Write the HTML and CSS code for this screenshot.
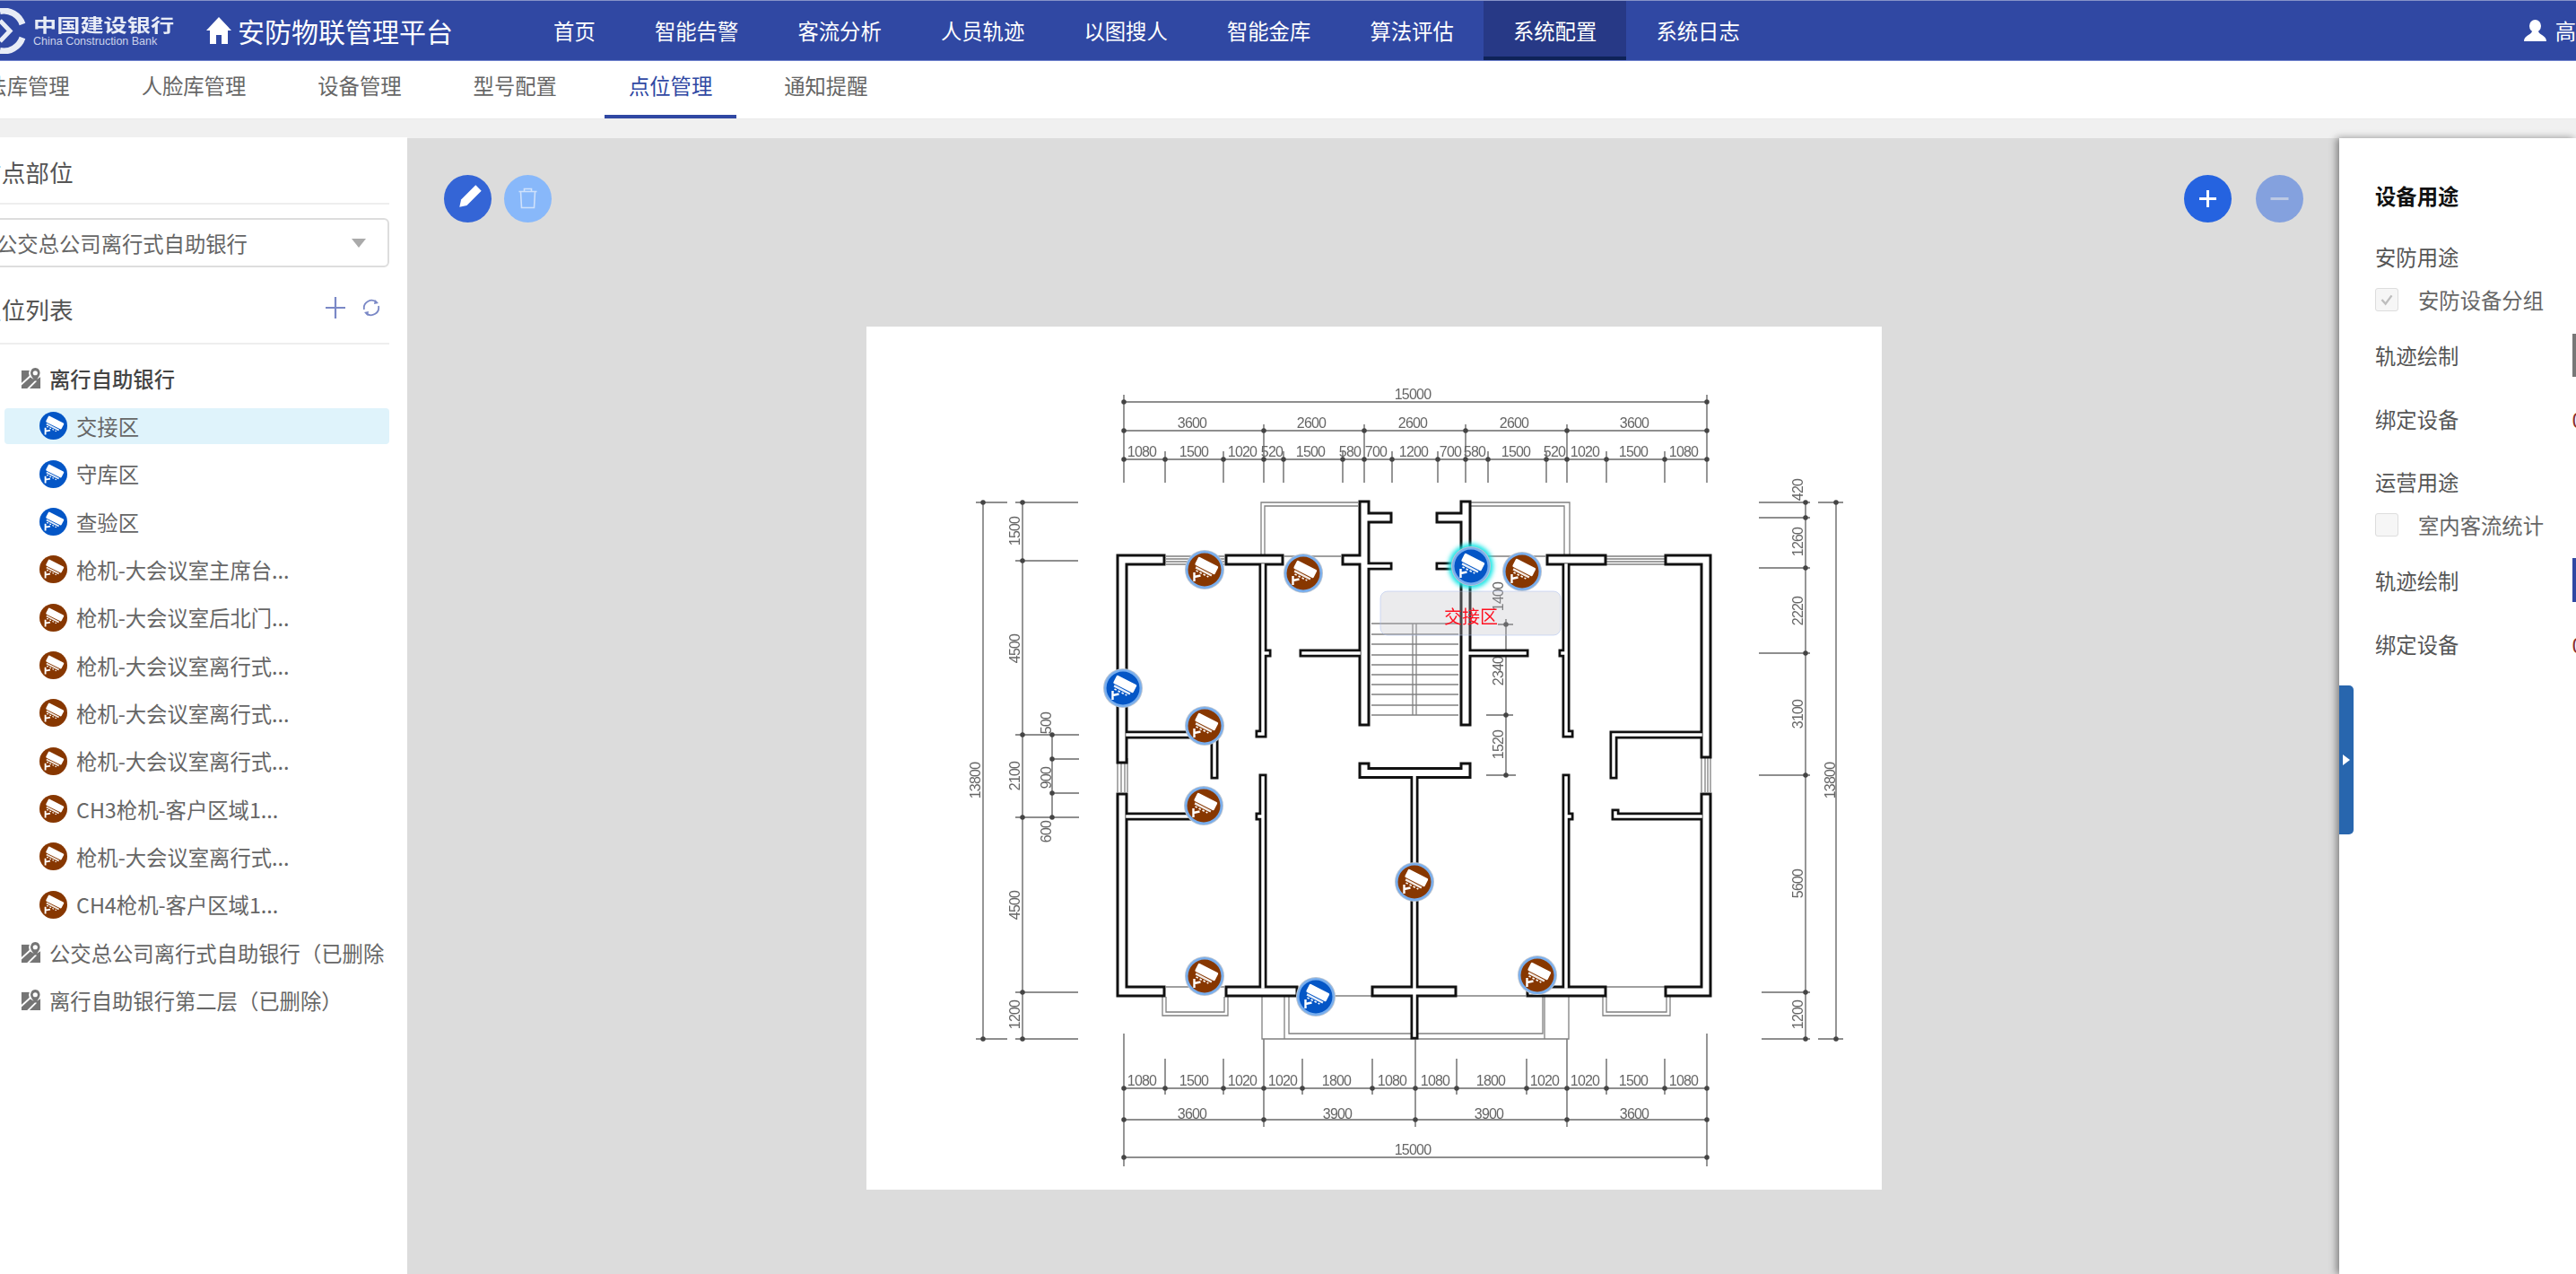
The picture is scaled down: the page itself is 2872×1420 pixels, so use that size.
FILE: index.html
```html
<!DOCTYPE html>
<html lang="zh-CN">
<head>
<meta charset="utf-8">
<title>安防物联管理平台</title>
<link rel="stylesheet" href="styles.css">
</head>
<body>
<svg class="defs" aria-hidden="true">
  <defs>
    <g id="cam">
      <g transform="rotate(27)">
        <rect x="-12.500" y="-10" width="25" height="10" rx="1.500" fill="#fff"/>
        <rect x="-10" y="1" width="20" height="2.400" fill="#fff" opacity=".9"/>
        <path d="M-8 5.200h2.500M-3.500 5.200h2.500M1 5.200h2.500M5.500 5.200h2" stroke="#fff" stroke-width="1.600"/>
      </g>
      <path d="M-11.500 13V3M-11.500 8L-4.500 6.500" stroke="#fff" stroke-width="2.400" fill="none"/>
    </g>
    <g id="pin-b">
      <circle r="22" fill="#b9c4d2"/>
      <circle r="21" fill="#78aeee"/>
      <circle r="18.500" fill="#0456c6"/>
      <use href="#cam"/>
    </g>
    <g id="pin-o">
      <circle r="22" fill="#b9c4d2"/>
      <circle r="21" fill="#78aeee"/>
      <circle r="18.500" fill="#873700"/>
      <use href="#cam"/>
    </g>
    <g id="ico-map">
      <rect x="1" y="4" width="22" height="21" fill="#757575"/>
      <path d="M0 21 14 8M8 26 18 16" stroke="#fff" stroke-width="2" fill="none"/>
      <circle cx="17" cy="7" r="7.500" fill="#fff"/>
      <path d="M17 1C13.500 1 11.500 4 11.500 7C11.500 11 17 16.500 17 16.500S22.500 11 22.500 7C22.500 4 20.500 1 17 1Z" fill="#757575"/>
      <circle cx="17" cy="7" r="2.700" fill="#fff"/>
    </g>
    <g id="wall-thick">
      <path d="M1251 845V624H1293M1372 624H1425M1502 624H1521M1521 564V803M1521 577H1546M1634 564V803M1634 577H1607M1730 624H1785M1862 624H1902V839M1251 890V1105H1293M1902 890V1105H1862M1372 1105H1441M1535 1105H1618M1708 1105H1785M1521 856V861.500H1634V856"/>
    </g>
    <g id="wall-thin">
      <path d="M1408 630V818H1404M1408 728H1413M1408 867V1100M1408 910H1404M1746 630V818H1750M1746 728H1742M1746 867V1100M1746 910H1750M1515 728H1453M1634 728H1700M1525 631H1548M1634 631H1605M1257 819H1340M1257 910H1335M1354 822V864M1896 819H1799V864M1896 910H1801V906M1577 866V1154"/>
    </g>
  </defs>
</svg>

<header class="topbar">
  <svg class="logo-mark" viewBox="0 0 30 51"><path d="M0 3.500A22 22 0 0 1 25 18M25 33A22 22 0 0 1 0 47.500" fill="none" stroke="#e8ecf6" stroke-width="7"/><path d="M0 14 11 25.500 0 37" fill="none" stroke="#e8ecf6" stroke-width="5"/></svg>
  <div class="logo-text">
    <span class="logo-cn">中国建设银行</span>
    <span class="logo-en">China Construction Bank</span>
  </div>
  <svg class="home" viewBox="0 0 28 30"><path d="M14 0 28 15H24V30H17V20H11V30H4V15H0Z" fill="#fff"/></svg>
  <div class="brand">安防物联管理平台</div>
  <nav class="nav">
    <a class="nav-item">首页</a>
    <a class="nav-item">智能告警</a>
    <a class="nav-item">客流分析</a>
    <a class="nav-item">人员轨迹</a>
    <a class="nav-item">以图搜人</a>
    <a class="nav-item">智能金库</a>
    <a class="nav-item">算法评估</a>
    <a class="nav-item is-active">系统配置</a>
    <a class="nav-item">系统日志</a>
  </nav>
  <div class="user">
    <svg class="user-ico" viewBox="0 0 25 24"><ellipse cx="12.500" cy="7" rx="6.500" ry="7" fill="#fff"/><path d="M0 24C0 17.500 8 17 9 13H16C17 17 25 17.500 25 24Z" fill="#fff"/></svg>
    <span>高</span>
  </div>
</header>

<div class="subtabs">
  <a class="tab">算法库管理</a>
  <a class="tab">人脸库管理</a>
  <a class="tab">设备管理</a>
  <a class="tab">型号配置</a>
  <a class="tab is-active">点位管理</a>
  <a class="tab">通知提醒</a>
</div>

<main class="main">
  <aside class="side">
    <div class="side-head first"><span class="side-title">布点部位</span></div>
    <div class="select"><span>公交总公司离行式自助银行</span><i class="caret"></i></div>
    <div class="side-head second">
      <span class="side-title">点位列表</span>
      <span class="side-tools">
        <svg class="tool-plus" viewBox="0 0 22 24"><path d="M11 0V24M0 12H22" stroke="#7a88c6" stroke-width="2.200"/></svg>
        <svg class="tool-refresh" viewBox="0 0 22 20"><path d="M3 12A8.500 8.500 0 0 1 17 4M19 8A8.500 8.500 0 0 1 5 16" fill="none" stroke="#7a88c6" stroke-width="1.800"/><path d="M15 1 19 5 14 6ZM7 19 3 15 8 14Z" fill="#7a88c6"/></svg>
      </span>
    </div>
    <ul class="tree">
      <li class="root strong"><svg class="map-ico" viewBox="0 0 24 26"><use href="#ico-map"/></svg><span class="root-text">离行自助银行</span></li>
      <li class="leaf"><div class="pill is-on"><svg class="cam-ico" viewBox="-20 -20 40 40"><circle r="20" fill="#0456c6"/><use href="#cam"/></svg><span>交接区</span></div></li>
      <li class="leaf"><div class="pill"><svg class="cam-ico" viewBox="-20 -20 40 40"><circle r="20" fill="#0456c6"/><use href="#cam"/></svg><span>守库区</span></div></li>
      <li class="leaf"><div class="pill"><svg class="cam-ico" viewBox="-20 -20 40 40"><circle r="20" fill="#0456c6"/><use href="#cam"/></svg><span>查验区</span></div></li>
      <li class="leaf"><div class="pill"><svg class="cam-ico" viewBox="-20 -20 40 40"><circle r="20" fill="#873700"/><use href="#cam"/></svg><span>枪机-大会议室主席台...</span></div></li>
      <li class="leaf"><div class="pill"><svg class="cam-ico" viewBox="-20 -20 40 40"><circle r="20" fill="#873700"/><use href="#cam"/></svg><span>枪机-大会议室后北门...</span></div></li>
      <li class="leaf"><div class="pill"><svg class="cam-ico" viewBox="-20 -20 40 40"><circle r="20" fill="#873700"/><use href="#cam"/></svg><span>枪机-大会议室离行式...</span></div></li>
      <li class="leaf"><div class="pill"><svg class="cam-ico" viewBox="-20 -20 40 40"><circle r="20" fill="#873700"/><use href="#cam"/></svg><span>枪机-大会议室离行式...</span></div></li>
      <li class="leaf"><div class="pill"><svg class="cam-ico" viewBox="-20 -20 40 40"><circle r="20" fill="#873700"/><use href="#cam"/></svg><span>枪机-大会议室离行式...</span></div></li>
      <li class="leaf"><div class="pill"><svg class="cam-ico" viewBox="-20 -20 40 40"><circle r="20" fill="#873700"/><use href="#cam"/></svg><span>CH3枪机-客户区域1...</span></div></li>
      <li class="leaf"><div class="pill"><svg class="cam-ico" viewBox="-20 -20 40 40"><circle r="20" fill="#873700"/><use href="#cam"/></svg><span>枪机-大会议室离行式...</span></div></li>
      <li class="leaf"><div class="pill"><svg class="cam-ico" viewBox="-20 -20 40 40"><circle r="20" fill="#873700"/><use href="#cam"/></svg><span>CH4枪机-客户区域1...</span></div></li>
      <li class="root"><svg class="map-ico" viewBox="0 0 24 26"><use href="#ico-map"/></svg><span class="root-text">公交总公司离行式自助银行（已删除）</span></li>
      <li class="root"><svg class="map-ico" viewBox="0 0 24 26"><use href="#ico-map"/></svg><span class="root-text">离行自助银行第二层（已删除）</span></li>
    </ul>
  </aside>

  <section class="stage">
    <div class="stage-tools">
      <div class="btn-group left">
        <button class="round edit"><svg viewBox="-26.500 -26.500 53 53"><g transform="rotate(45)"><path d="M-4.500-17H4.500V6L0 13-4.500 6Z" fill="#fff"/></g></svg></button>
        <button class="round del"><svg viewBox="-26.500 -26.500 53 53"><path d="M-10-8H10M-4-8V-11H4V-8M-8-8-7 10H7L8-8" fill="none" stroke="#cfe1fb" stroke-width="1.600"/></svg></button>
      </div>
      <div class="btn-group right">
        <button class="round plus"><svg viewBox="-26.500 -26.500 53 53"><path d="M0-9.500V9.500M-9.500 0H9.500" stroke="#fff" stroke-width="3"/></svg></button>
        <button class="round minus"><svg viewBox="-26.500 -26.500 53 53"><path d="M-10 0H10" stroke="#bcc9e4" stroke-width="3"/></svg></button>
      </div>
    </div>

    <div class="plan">
      <svg class="plan-svg" viewBox="966 364 1132 962">
        <g class="dims">
          <path d="M1253 448H1903M1253 480H1903M1253 512H1903M1253 440V538M1903 440V538M1409 473V538M1521 473V538M1634 473V538M1747 473V538M1299 503V538M1364 503V538M1431 503V538M1497 503V538M1552 503V538M1603 503V538M1659 503V538M1724 503V538M1791 503V538M1856 503V538"/>
          <path d="M1253 1213H1903M1253 1248H1903M1253 1290H1903M1253 1152V1300M1903 1152V1300M1409 1158V1256M1578 1158V1256M1747 1158V1256M1299 1180V1220M1364 1180V1220M1452 1180V1220M1530 1180V1220M1624 1180V1220M1702 1180V1220M1791 1180V1220M1856 1180V1220"/>
          <path d="M1096 560V1158M1088 560H1123M1088 1158H1123M1140 560V1158M1132 560H1202M1132 625H1202M1132 819H1203M1132 911H1203M1132 1106H1202M1132 1158H1202M1173 819V911M1173 846H1203M1173 884H1203"/>
          <path d="M2013 560V1158M1961 560H2018M1961 577H2018M1961 633H2018M1961 728H2018M1961 864H2018M1964 1106H2018M1964 1158H2018M2047 560V1158M2027 560H2055M2027 1158H2055"/>
          <path d="M1679 690V864M1657 797H1687M1657 864H1690M1670 696H1687"/>
        </g>
        <path class="dots" d="M1253 448h0M1903 448h0M1253 480h0M1409 480h0M1521 480h0M1634 480h0M1747 480h0M1903 480h0M1253 512h0M1299 512h0M1364 512h0M1409 512h0M1431 512h0M1497 512h0M1521 512h0M1552 512h0M1603 512h0M1634 512h0M1659 512h0M1724 512h0M1747 512h0M1791 512h0M1856 512h0M1903 512h0M1253 1213h0M1299 1213h0M1364 1213h0M1409 1213h0M1452 1213h0M1530 1213h0M1578 1213h0M1624 1213h0M1702 1213h0M1747 1213h0M1791 1213h0M1856 1213h0M1903 1213h0M1253 1248h0M1409 1248h0M1578 1248h0M1747 1248h0M1903 1248h0M1253 1290h0M1903 1290h0M1096 560h0M1096 1158h0M1140 560h0M1140 625h0M1140 819h0M1140 911h0M1140 1106h0M1140 1158h0M1173 819h0M1173 846h0M1173 884h0M1173 911h0M2013 560h0M2013 577h0M2013 633h0M2013 728h0M2013 864h0M2013 1106h0M2013 1158h0M2047 560h0M2047 1158h0M1679 696h0M1679 797h0M1679 864h0"/>

        <g class="dim-text">
          <text x="1575" y="439">15000</text>
          <text x="1329" y="471">3600</text><text x="1462" y="471">2600</text><text x="1575" y="471">2600</text><text x="1688" y="471">2600</text><text x="1822" y="471">3600</text>
          <text x="1273" y="503">1080</text><text x="1331" y="503">1500</text><text x="1385" y="503">1020</text><text x="1418" y="503">520</text><text x="1461" y="503">1500</text><text x="1505" y="503">580</text><text x="1534" y="503">700</text><text x="1576" y="503">1200</text><text x="1617" y="503">700</text><text x="1644" y="503">580</text><text x="1690" y="503">1500</text><text x="1733" y="503">520</text><text x="1767" y="503">1020</text><text x="1821" y="503">1500</text><text x="1877" y="503">1080</text>
          <text x="1273" y="1204">1080</text><text x="1331" y="1204">1500</text><text x="1385" y="1204">1020</text><text x="1430" y="1204">1020</text><text x="1490" y="1204">1800</text><text x="1552" y="1204">1080</text><text x="1600" y="1204">1080</text><text x="1662" y="1204">1800</text><text x="1722" y="1204">1020</text><text x="1767" y="1204">1020</text><text x="1821" y="1204">1500</text><text x="1877" y="1204">1080</text>
          <text x="1329" y="1241">3600</text><text x="1491" y="1241">3900</text><text x="1660" y="1241">3900</text><text x="1822" y="1241">3600</text>
          <text x="1575" y="1281">15000</text>
          <text transform="rotate(-90 1087 870)" x="1087" y="870">13800</text>
          <text transform="rotate(-90 1131 592)" x="1131" y="592">1500</text>
          <text transform="rotate(-90 1131 723)" x="1131" y="723">4500</text>
          <text transform="rotate(-90 1131 865)" x="1131" y="865">2100</text>
          <text transform="rotate(-90 1131 1009)" x="1131" y="1009">4500</text>
          <text transform="rotate(-90 1131 1131)" x="1131" y="1131">1200</text>
          <text transform="rotate(-90 1166 806)" x="1166" y="806">500</text>
          <text transform="rotate(-90 1166 867)" x="1166" y="867">900</text>
          <text transform="rotate(-90 1166 927)" x="1166" y="927">600</text>
          <text transform="rotate(-90 2004 546)" x="2004" y="546">420</text>
          <text transform="rotate(-90 2004 604)" x="2004" y="604">1260</text>
          <text transform="rotate(-90 2004 681)" x="2004" y="681">2220</text>
          <text transform="rotate(-90 2004 796)" x="2004" y="796">3100</text>
          <text transform="rotate(-90 2004 985)" x="2004" y="985">5600</text>
          <text transform="rotate(-90 2004 1131)" x="2004" y="1131">1200</text>
          <text transform="rotate(-90 2040 870)" x="2040" y="870">13800</text>
          <text transform="rotate(-90 1670 665)" x="1670" y="665">1400</text>
          <text transform="rotate(-90 1670 748)" x="1670" y="748">2340</text>
          <text transform="rotate(-90 1670 830)" x="1670" y="830">1520</text>
        </g>

        <path class="thin" d="M1300 620H1365M1300 623H1365M1300 626H1365M1300 629H1365M1791 620H1856M1791 623H1856M1791 626H1856M1791 629H1856M1246 845V883M1250 845V883M1254 845V883M1257 845V883M1897 845V883M1901 845V883M1904 845V883M1907 845V883M1432 620H1495M1640 620H1723M1300 1100H1365M1791 1100H1856M1447 1110H1529M1624 1110H1701"/>
        <path class="thin" d="M1406 618V560H1514M1410 618V564H1514M1640 560H1750V618M1640 564H1744V618M1407 1111V1158H1749V1111M1432 1111V1158M1437 1111V1152H1720V1111M1722 1111V1158M1296 1111V1132H1369V1111M1300 1111V1128H1365V1111M1787 1111V1132H1862V1111M1791 1111V1128H1858V1111"/>
        <path class="thin" d="M1529 695H1626M1529 707H1626M1529 718H1626M1529 730H1626M1529 741H1626M1529 752H1626M1529 763H1626M1529 774H1626M1529 786H1626M1529 797H1626M1575 695V797M1579 695V797"/>

        <use class="w-thick-o" href="#wall-thick"/>
        <use class="w-thin-o" href="#wall-thin"/>
        <use class="w-thick-i" href="#wall-thick"/>
        <use class="w-thin-i" href="#wall-thin"/>

        <rect class="tag-box" x="1539" y="659" width="201" height="49" rx="8"/>
        <text class="tag-text" x="1640" y="686">交接区</text>

        <use href="#pin-o" x="1343" y="635"/>
        <use href="#pin-o" x="1453" y="639"/>
        <use href="#pin-b" x="1252" y="767"/>
        <use href="#pin-o" x="1343" y="809"/>
        <use href="#pin-o" x="1342" y="898"/>
        <use href="#pin-o" x="1577" y="983"/>
        <use href="#pin-o" x="1343" y="1088"/>
        <use href="#pin-o" x="1714" y="1087"/>
        <use href="#pin-b" x="1467" y="1111"/>
        <use href="#pin-o" x="1697" y="637"/>
        <circle class="glow" cx="1640" cy="631" r="25"/>
        <use href="#pin-b" x="1640" y="631"/>
      </svg>
    </div>
  </section>

  <aside class="panel">
    <button class="collapse"><i class="collapse-arrow"></i></button>
    <h3 class="panel-title">设备用途</h3>
    <div class="p-label gap-a">安防用途</div>
    <label class="p-check gap-b"><span class="box"><svg viewBox="0 0 26 26"><path d="M7 13 11.500 18 19 8" fill="none" stroke="#bdbdbd" stroke-width="2.500"/></svg></span>安防设备分组</label>
    <div class="p-row gap-c"><span class="p-name">轨迹绘制</span><span class="swatch grey"></span></div>
    <div class="p-row gap-d"><span class="p-name">绑定设备</span><span class="count">0</span></div>
    <div class="p-label gap-e">运营用途</div>
    <label class="p-check gap-b"><span class="box"></span>室内客流统计</label>
    <div class="p-row gap-f"><span class="p-name">轨迹绘制</span><span class="swatch navy"></span></div>
    <div class="p-row gap-d"><span class="p-name">绑定设备</span><span class="count">0</span></div>
  </aside>
</main>
</body>
</html>
```

FILE: styles.css
```css
* { box-sizing: border-box; }
html, body { margin: 0; padding: 0; }
body {
  width: 2872px;
  height: 1420px;
  overflow: hidden;
  display: flex;
  flex-direction: column;
  background: #f0f0f0;
  font-family: "Noto Sans CJK SC", "Noto Sans", sans-serif;
  font-size: 23.33px;
  color: #666;
}
.defs { position: absolute; width: 0; height: 0; }

/* top bar */
.topbar {
  flex: none;
  height: 68px;
  display: flex;
  align-items: center;
  background: #3048a3;
  border-top: 1px solid #8794c8;
  border-bottom: 1px solid #6c7fcb;
  color: #fff;
  overflow: hidden;
}
.logo-mark { flex: none; width: 30px; height: 51px; margin-right: 7px; }
.logo-text { flex: none; width: 158px; display: flex; flex-direction: column; }
.logo-cn {
  font-size: 20px;
  line-height: 22px;
  font-weight: 700;
  white-space: nowrap;
  color: #e8ecf6;
  transform: scaleX(1.31);
  transform-origin: left center;
}
.logo-en {
  font-family: "Liberation Sans", sans-serif;
  font-size: 12.5px;
  line-height: 12px;
  color: #ccd3ea;
  white-space: nowrap;
  margin-top: 1px;
}
.home { flex: none; width: 28px; height: 30px; margin-left: 35px; margin-right: 7px; }
.brand { flex: none; width: 240px; font-size: 30px; line-height: 40px; white-space: nowrap; }
.nav { flex: none; display: flex; height: 100%; margin-left: 79px; }
.nav-item {
  padding: 3px 33.1px 0;
  display: flex;
  align-items: center;
  justify-content: center;
  border-bottom: 4px solid transparent;
  white-space: nowrap;
}
.nav-item.is-active { background: #273986; border-bottom-color: #0e2258; }
.user { margin-left: auto; display: flex; align-items: center; gap: 10px; flex: none; }
.user-ico { width: 25px; height: 24px; }

/* secondary tabs */
.subtabs {
  flex: none;
  height: 65px;
  display: flex;
  gap: 26px;
  margin-left: -66px;
  background: #fff;
  border-bottom: 1px solid #e9e9e9;
  color: #666;
}
.tab {
  flex: none;
  padding: 0 27px 6px;
  display: flex;
  align-items: center;
  white-space: nowrap;
  border-bottom: 4px solid transparent;
  height: 64px;
  box-sizing: border-box;
}
.tab.is-active { color: #3048a3; border-bottom-color: #3048a3; }

/* page body */
.main { flex: 1; display: flex; margin-top: 21px; min-height: 0; }

.side {
  flex: none;
  width: 454px;
  margin-top: -1px;
  background: #fff;
  overflow: hidden;
  padding-right: 20px;
}
.side-head {
  display: flex;
  justify-content: space-between;
  align-items: flex-start;
  border-bottom: 2px solid #eee;
  margin-left: -25px;
  line-height: 36px;
  font-size: 26.67px;
  color: #555;
}
.side-head.first { height: 75px; padding-top: 21px; }
.side-head.second { height: 86px; padding-top: 29px; }
.side-title { white-space: nowrap; }
.side-tools { display: flex; align-items: center; gap: 18px; margin-top: 4px; margin-right: 9px; }
.tool-plus { width: 22px; height: 24px; }
.tool-refresh { width: 22px; height: 20px; }
.select {
  height: 55px;
  margin: 15px 0 0 -30px;
  padding: 0 24px;
  display: flex;
  align-items: center;
  justify-content: space-between;
  border: 2px solid #ddd;
  border-radius: 6px;
  white-space: nowrap;
}
.caret {
  width: 0;
  height: 0;
  border-left: 8px solid transparent;
  border-right: 8px solid transparent;
  border-top: 10px solid #aaa;
}
.tree { list-style: none; margin: 0; padding: 11px 0 0; }
.root {
  height: 53.33px;
  display: flex;
  align-items: center;
  padding-left: 23px;
  color: #666;
}
.root.strong { color: #444; font-weight: 500; }
.map-ico { flex: none; width: 23px; height: 25px; margin-right: 9px; }
.root-text { white-space: nowrap; overflow: hidden; max-width: 373px; }
.leaf { height: 53.33px; padding: 6.66px 0 6.66px 5px; }
.pill {
  height: 40px;
  display: flex;
  align-items: center;
  gap: 10px;
  padding-left: 39px;
  border-radius: 4px;
  white-space: nowrap;
}
.pill.is-on { background: #dff3fb; }
.cam-ico { flex: none; width: 31px; height: 31px; }

/* map */
.stage {
  flex: 1;
  min-width: 0;
  background: #dcdcdc;
  padding: 41px 40px 0 41px;
  display: flex;
  flex-direction: column;
}
.stage-tools { flex: none; display: flex; justify-content: space-between; }
.btn-group { display: flex; }
.btn-group.left { gap: 14px; }
.btn-group.right { gap: 27px; }
.round {
  width: 53px;
  height: 53px;
  padding: 0;
  border: 0;
  border-radius: 50%;
  display: block;
}
.round svg { display: block; width: 53px; height: 53px; }
.round.edit { background: #3465d6; }
.round.del { background: #88b8fa; }
.round.plus { background: #2563e0; }
.round.minus { background: #84a1de; }

.plan {
  flex: none;
  width: 1132px;
  height: 962px;
  margin: 116px 0 0 471px;
  background: #fff;
}
.plan-svg { display: block; width: 1132px; height: 962px; filter: blur(0.55px); }
.dims path { fill: none; stroke: #6a6a6a; stroke-width: 1.4; }
.dots { fill: none; stroke: #444; stroke-width: 5.5; stroke-linecap: round; }
.thin { fill: none; stroke: #808080; stroke-width: 1.3; }
.dim-text text {
  font-family: "Liberation Sans", sans-serif;
  font-size: 16px;
  letter-spacing: -0.8px;
  fill: #666;
  text-anchor: middle;
  dominant-baseline: central;
}
.w-thick-o { fill: none; stroke: #111; stroke-width: 13; stroke-linecap: square; stroke-linejoin: miter; }
.w-thick-i { fill: none; stroke: #fff; stroke-width: 7; stroke-linecap: square; stroke-linejoin: miter; }
.w-thin-o { fill: none; stroke: #111; stroke-width: 9; stroke-linecap: square; stroke-linejoin: miter; }
.w-thin-i { fill: none; stroke: #fff; stroke-width: 3.5; stroke-linecap: square; stroke-linejoin: miter; }
.tag-box { fill: rgba(190, 190, 195, 0.3); stroke: rgba(170, 190, 240, 0.5); stroke-width: 1; }
.tag-text {
  font-family: "Noto Sans CJK SC", sans-serif;
  font-size: 20px;
  fill: #ff1020;
  text-anchor: middle;
  dominant-baseline: central;
}
.glow { fill: #14e6e6; filter: blur(2.5px); }

/* right panel */
.panel {
  flex: none;
  width: 264px;
  position: relative;
  background: #fff;
  padding: 47px 0 0 40px;
  box-shadow: -3px 0 8px rgba(0, 0, 0, 0.42);
  overflow: hidden;
  line-height: 34px;
}
.panel-title { margin: 0; font-size: 23.33px; line-height: 34px; font-weight: 700; color: #111; }
.p-label, .p-name { color: #555; white-space: nowrap; }
.p-check { display: flex; align-items: center; white-space: nowrap; color: #666; }
.box {
  flex: none;
  width: 26px;
  height: 26px;
  margin-right: 22px;
  border: 1px solid #ddd;
  border-radius: 3px;
  background: #f6f6f6;
}
.box svg { display: block; width: 24px; height: 24px; }
.p-row { display: flex; align-items: center; white-space: nowrap; }
.p-name { flex: none; width: 219.5px; }
.swatch { flex: none; width: 60px; }
.swatch.grey { height: 48px; background: #777; }
.swatch.navy { height: 49px; background: #3048a3; }
.count { color: #8a3030; }
.gap-a { margin-top: 34px; }
.gap-b { margin-top: 14px; }
.gap-c { margin-top: 21px; }
.gap-d { margin-top: 30px; }
.gap-e { margin-top: 36px; }
.gap-f { margin-top: 20px; }
.collapse {
  position: absolute;
  left: 0;
  top: 610px;
  width: 16px;
  height: 166px;
  padding: 0;
  border: 0;
  border-radius: 0 5px 5px 0;
  background: #2866ae;
}
.collapse-arrow {
  position: absolute;
  left: 4px;
  top: 77px;
  width: 0;
  height: 0;
  border-top: 6px solid transparent;
  border-bottom: 6px solid transparent;
  border-left: 8px solid #fff;
}
```
